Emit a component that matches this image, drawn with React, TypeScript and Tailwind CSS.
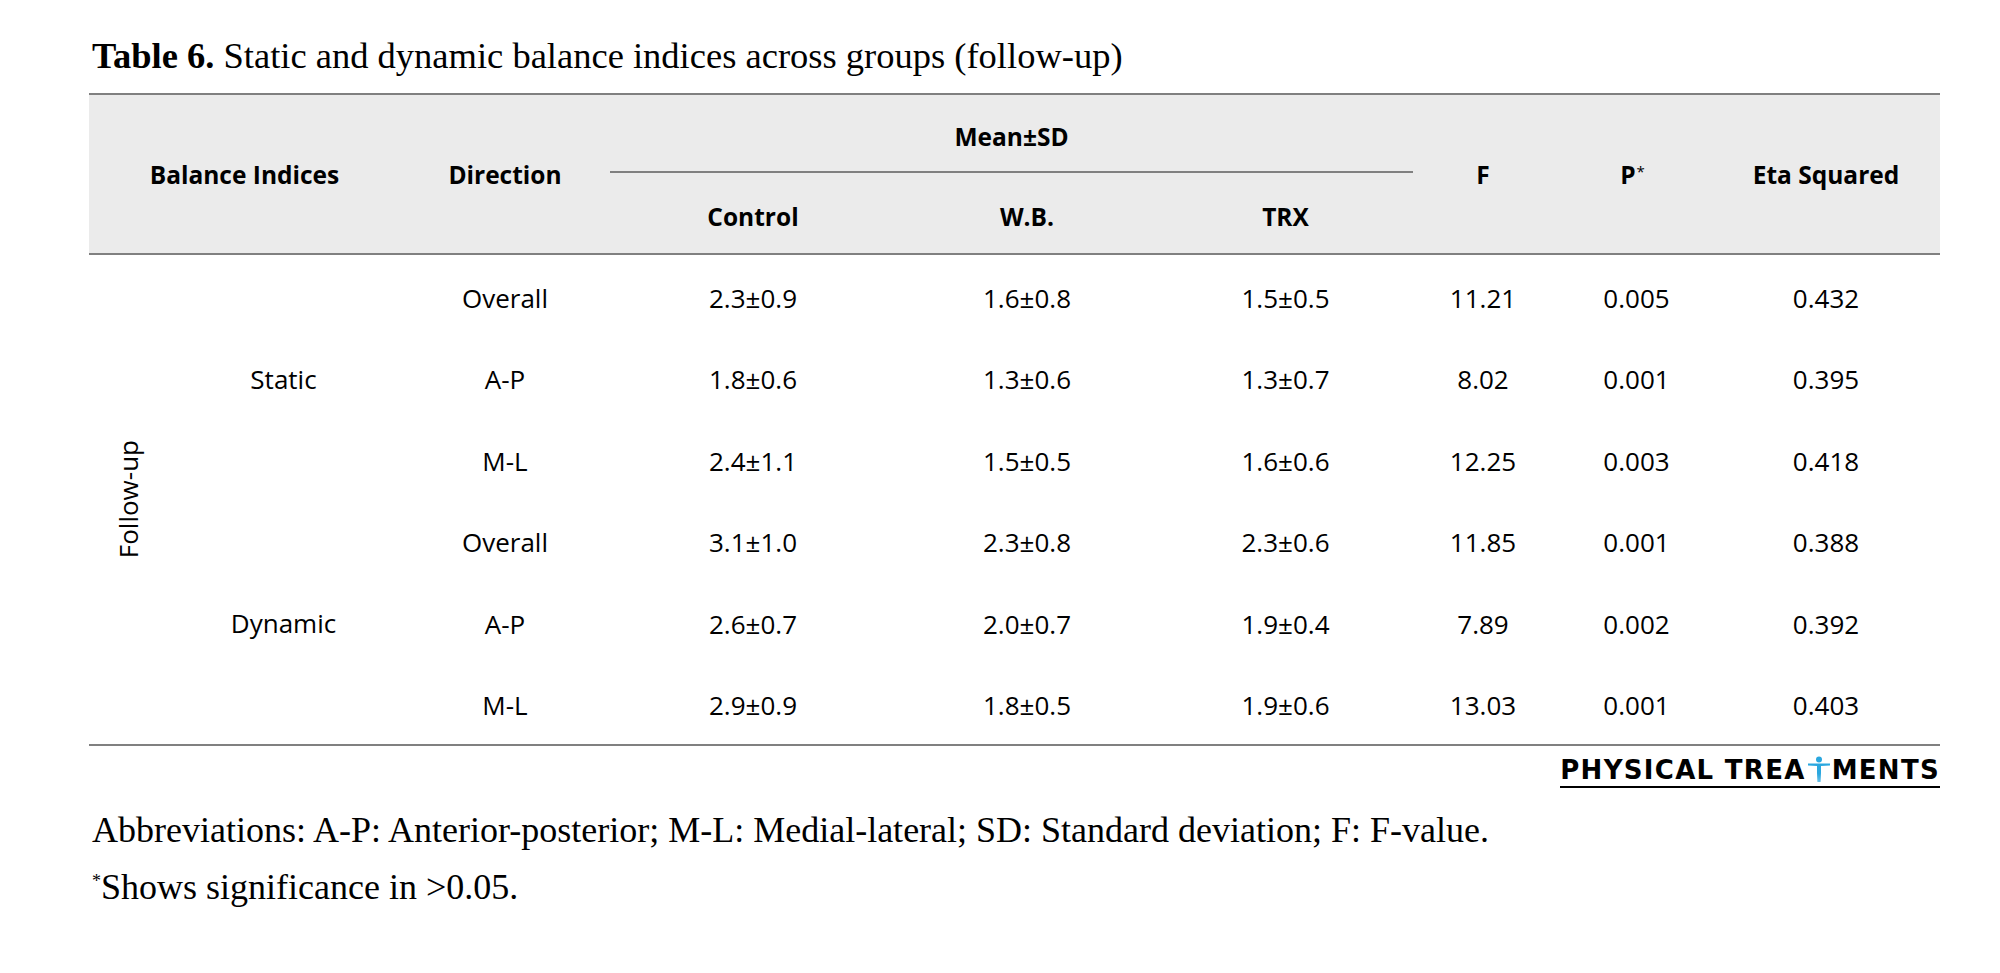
import React from 'react';

const cols = 'grid grid-cols-[78px_233px_210px_286px_262px_255px_140px_159px_228px]';

type Row = { dir: string; control: string; wb: string; trx: string; f: string; p: string; eta: string };

const rows: Row[] = [
  { dir: 'Overall', control: '2.3±0.9', wb: '1.6±0.8', trx: '1.5±0.5', f: '11.21', p: '0.005', eta: '0.432' },
  { dir: 'A-P', control: '1.8±0.6', wb: '1.3±0.6', trx: '1.3±0.7', f: '8.02', p: '0.001', eta: '0.395' },
  { dir: 'M-L', control: '2.4±1.1', wb: '1.5±0.5', trx: '1.6±0.6', f: '12.25', p: '0.003', eta: '0.418' },
  { dir: 'Overall', control: '3.1±1.0', wb: '2.3±0.8', trx: '2.3±0.6', f: '11.85', p: '0.001', eta: '0.388' },
  { dir: 'A-P', control: '2.6±0.7', wb: '2.0±0.7', trx: '1.9±0.4', f: '7.89', p: '0.002', eta: '0.392' },
  { dir: 'M-L', control: '2.9±0.9', wb: '1.8±0.5', trx: '1.9±0.6', f: '13.03', p: '0.001', eta: '0.403' },
];

const Cell = ({ children, className = '' }: { children?: React.ReactNode; className?: string }) => (
  <div className={`flex items-center justify-center ${className}`}>{children}</div>
);

// little man standing in for the T of TREATMENTS
const Figure = () => (
  <svg width="22" height="26" viewBox="0 0 22 26" className="shrink-0 mx-[2px] -mt-[3px]">
    <circle cx="11" cy="3.4" r="3" fill="#2aa7df" />
    <path d="M0 7.6 L22 7.6 L22 9.4 L13 10 L13 17 L12.4 26 L11.3 26 L11 18 L10.7 26 L9.6 26 L9 17 L9 10 L0 9.4 Z" fill="#2aa7df" />
  </svg>
);

export default function App() {
  return (
    <div className="w-[2000px] h-[973px] bg-white text-black pl-[89px] pt-[36px]">
      <h1 className="pl-[3px] font-['Liberation_Serif',serif] text-[36.5px] leading-[40px] font-normal">
        <span className="font-bold">Table 6.</span> Static and dynamic balance indices across groups (follow-up)
      </h1>

      <div className="mt-[17px] w-[1851px] font-['Open_Sans',sans-serif] text-[26px]">
        <div className={`${cols} grid-rows-[78px_80px] bg-[#ebebeb] border-y-2 border-[#808080] font-bold text-[24.5px]`}>
          <Cell className="col-span-2 row-span-2 pt-[3px]">Balance Indices</Cell>
          <Cell className="row-span-2 pt-[3px]">Direction</Cell>
          <Cell className="col-span-3 border-b-2 border-[#808080] pt-[8px]">Mean±SD</Cell>
          <Cell className="row-span-2 pt-[3px]">F</Cell>
          <Cell className="row-span-2 pt-[3px]">
            <span>
              P<sup className="text-[15px] font-normal relative -top-[7px] ml-[1px]">*</sup>
            </span>
          </Cell>
          <Cell className="row-span-2 pt-[3px]">Eta Squared</Cell>
          <Cell className="pt-[8px]">Control</Cell>
          <Cell className="pt-[8px]">W.B.</Cell>
          <Cell className="pt-[8px]">TRX</Cell>
        </div>

        <div className={`${cols} grid-rows-[repeat(6,81.5px)] border-b-2 border-[#808080]`}>
          <Cell className="row-span-6 row-start-1 col-start-1">
            <span className="[writing-mode:vertical-rl] rotate-180">Follow-up</span>
          </Cell>
          <Cell className="row-span-3 row-start-1 col-start-2 pt-[4px]">Static</Cell>
          <Cell className="row-span-3 row-start-4 col-start-2 pt-[4px]">Dynamic</Cell>
          {rows.map((r, i) => (
            <React.Fragment key={i}>
              <Cell className="col-start-3 pt-[5px]">{r.dir}</Cell>
              <Cell className="pt-[5px]">{r.control}</Cell>
              <Cell className="pt-[5px]">{r.wb}</Cell>
              <Cell className="pt-[5px]">{r.trx}</Cell>
              <Cell className="pt-[5px]">{r.f}</Cell>
              <Cell className="pt-[5px] pl-[8px]">{r.p}</Cell>
              <Cell className="pt-[5px]">{r.eta}</Cell>
            </React.Fragment>
          ))}
        </div>

        <div className="flex justify-end mt-[10px]">
          <div className="flex items-center whitespace-nowrap pb-[2px] border-b-2 border-black font-['DejaVu_Sans',sans-serif] font-bold text-[26px] leading-[28px] tracking-[1.3px]">
            <span>PHYSICAL TREA</span>
            <Figure />
            <span>MENTS</span>
          </div>
        </div>
      </div>

      <div className="font-['Liberation_Serif',serif] text-[36px] leading-[40px] pl-[3px]">
        <p className="mt-[22px]">
          Abbreviations: A-P: Anterior-posterior; M-L: Medial-lateral; SD: Standard deviation; F: F-value.
        </p>
        <p className="mt-[17px]">
          <sup className="text-[18px] relative -top-[12px]">*</sup>Shows significance in &gt;0.05.
        </p>
      </div>
    </div>
  );
}
